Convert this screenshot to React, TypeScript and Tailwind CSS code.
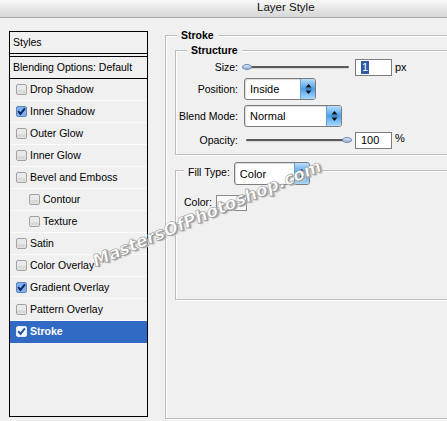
import React from "react";

function Box({ checked, onBlue }: { checked?: boolean; onBlue?: boolean }) {
  return (
    <svg width="11" height="11" viewBox="0 0 11 11" className="shrink-0">
      <rect
        x="0.5"
        y="0.5"
        width="10"
        height="10"
        rx="1.5"
        fill={checked ? (onBlue ? "#f4f8ff" : "#7fb0e8") : "#e9e9e9"}
        stroke={checked ? (onBlue ? "#dfe9f8" : "#5b86c0") : "#a2a2a2"}
      />
      {!checked && <rect x="1.5" y="6" width="8" height="3.5" fill="#d9d9d9" />}
      {checked && (
        <path d="M2.2 5.2 L4.5 7.9 L8.9 2.4" stroke={onBlue ? "#1d4fa6" : "#0c2563"} strokeWidth="1.9" fill="none" />
      )}
    </svg>
  );
}

function Row({ label, checked, indent, selected }: { label: string; checked?: boolean; indent?: boolean; selected?: boolean }) {
  return (
    <div
      className={`flex h-[22px] items-center gap-[3px] border-b ${
        selected ? "bg-[#316ac5] border-[#316ac5] text-white font-bold" : "border-[#fbfbfb] text-black"
      } ${indent ? "pl-[19px]" : "pl-[6px]"}`}
    >
      <Box checked={checked} onBlue={selected} />
      <span className="leading-none">{label}</span>
    </div>
  );
}

function Arrows() {
  return (
    <svg width="7" height="12" viewBox="0 0 7 12">
      <polygon points="3.5,1 0.5,4.6 6.5,4.6" fill="#111" />
      <rect x="0.5" y="5.6" width="6" height="0.8" fill="#1a3a5c" opacity="0.6" />
      <polygon points="0.5,7.4 6.5,7.4 3.5,11" fill="#111" />
    </svg>
  );
}

function Select({ value, width, height = 22 }: { value: string; width: number; height?: number }) {
  return (
    <div
      className="flex shrink-0 items-stretch rounded-[3px] border border-[#7c7c7c] bg-white shadow-[inset_1px_1px_1px_rgba(0,0,0,0.15)]"
      style={{ width, height }}
    >
      <span className="flex flex-1 items-center pl-[5px] pt-[1px] text-[11px] text-black">{value}</span>
      <span className="flex w-[15px] items-center justify-center rounded-r-[3px] border-l border-[#6a9fd0] bg-gradient-to-b from-[#b9ddfb] via-[#4a9ee9] to-[#a9dafc]">
        <Arrows />
      </span>
    </div>
  );
}

function Slider({ at }: { at: "start" | "end" }) {
  return (
    <div className="relative h-[17px] w-[110px] shrink-0">
      <div className="absolute left-[4px] right-[3px] top-[7px] h-[2px] rounded-full bg-[#5a5a5a] shadow-[0_1px_0_#d8d8d8]" />
      <div
        className={`absolute top-[5px] h-[6px] w-[10px] rounded-[50%] border border-[#6f86b0] bg-gradient-to-b from-[#dfe9f8] to-[#8fa9d6] ${
          at === "start" ? "left-0" : "right-0"
        }`}
      />
    </div>
  );
}

function NumInput({ value, highlight }: { value: string; highlight?: boolean }) {
  return (
    <div className="flex h-[17px] w-[37px] shrink-0 items-center border border-[#7d7d7d] bg-white pl-[5px] text-[11px] text-black">
      {highlight ? <span className="bg-[#2d5ca8] px-[1px] leading-[13px] text-white">{value}</span> : <span>{value}</span>}
    </div>
  );
}

export default function App() {
  return (
    <div className="relative h-[421px] w-[447px] overflow-hidden bg-[#f0f0f0] font-['Liberation_Sans',Arial,sans-serif] text-[10.5px] text-black">
      {/* title bar */}
      <div className="h-[18px] border-b border-[#a8a8a8] bg-gradient-to-b from-[#f9f9f9] to-[#d6d6d6] pl-[257px] text-[11.5px] leading-[15px] text-[#111]">
        Layer Style
      </div>

      <div className="flex items-start pl-[9px] pt-[11px]">
        {/* left list */}
        <div className="mt-[2px] h-[386px] w-[139px] shrink-0 border border-black bg-[#f0f0f0]">
          <div className="flex h-[22px] items-center border-b border-black pl-[3px]">Styles</div>
          <div className="h-[2px]" />
          <div className="flex h-[23px] items-center border-y border-black pl-[3px]">Blending Options: Default</div>
          <Row label="Drop Shadow" />
          <Row label="Inner Shadow" checked />
          <Row label="Outer Glow" />
          <Row label="Inner Glow" />
          <Row label="Bevel and Emboss" />
          <Row label="Contour" indent />
          <Row label="Texture" indent />
          <Row label="Satin" />
          <Row label="Color Overlay" />
          <Row label="Gradient Overlay" checked />
          <Row label="Pattern Overlay" />
          <Row label="Stroke" checked selected />
        </div>

        {/* right side */}
        <fieldset className="ml-[17px] h-[390px] w-[300px] shrink-0 border border-[#bdbdbd] shadow-[inset_1px_1px_0_#fff,1px_1px_0_#fff]">
          <legend className="ml-[11px] bg-[#f0f0f0] px-[4px] font-bold leading-[13px]">Stroke</legend>

          <fieldset className="ml-[9px] mt-[2px] h-[111px] w-[300px] border border-[#bdbdbd] shadow-[inset_1px_1px_0_#fff,1px_1px_0_#fff]">
            <legend className="ml-[11px] bg-[#f0f0f0] px-[4px] font-bold leading-[13px]">Structure</legend>

            <div className="mt-[2px] flex h-[17px] items-center">
              <span className="w-[62px] text-right">Size:</span>
              <span className="ml-[4px]">
                <Slider at="start" />
              </span>
              <span className="ml-[3px]">
                <NumInput value="1" highlight />
              </span>
              <span className="ml-[3px] text-[11px] leading-none">px</span>
            </div>

            <div className="mt-[2px] flex h-[22px] items-center">
              <span className="w-[62px] pt-[2px] text-right">Position:</span>
              <span className="ml-[6px]">
                <Select value="Inside" width={72} />
              </span>
            </div>

            <div className="mt-[5px] flex h-[22px] items-center">
              <span className="w-[62px] pt-[2px] text-right">Blend Mode:</span>
              <span className="ml-[6px]">
                <Select value="Normal" width={98} />
              </span>
            </div>

            <div className="mt-[5px] flex h-[17px] items-center">
              <span className="w-[62px] text-right">Opacity:</span>
              <span className="ml-[4px]">
                <Slider at="end" />
              </span>
              <span className="ml-[3px]">
                <NumInput value="100" />
              </span>
              <span className="ml-[3px] -mt-[4px] text-[11px] leading-none">%</span>
            </div>
          </fieldset>

          <fieldset className="ml-[9px] mt-[7px] h-[138px] w-[300px] border border-[#bdbdbd] shadow-[inset_1px_1px_0_#fff,1px_1px_0_#fff]">
            <legend className="ml-[8px] bg-[#f0f0f0] px-[4px]">
              <div className="flex items-start">
                <span className="pt-[4px] leading-[13px]">Fill Type:</span>
                <span className="mb-[-6px] ml-[4px]">
                  <Select value="Color" width={76} height={23} />
                </span>
              </div>
            </legend>
            <div className="mt-[16px] flex h-[16px] items-center pl-[8px]">
              <span>Color:</span>
              <span className="ml-[4px] h-[16px] w-[31px] border border-[#8a8a8a] bg-[#f9f9f9]" />
            </div>
          </fieldset>
        </fieldset>
      </div>

      {/* watermark */}
      <div className="pointer-events-none absolute left-[207px] top-[214px] -translate-x-1/2 -translate-y-1/2 rotate-[-23deg] whitespace-nowrap font-['DejaVu_Sans',sans-serif] text-[17px] font-bold italic tracking-[0px] text-white [-webkit-text-stroke:0.5px_#8f8f8f] [text-shadow:1px_1px_0_#9c9c9c,2px_2px_1px_#c4c4c4]">
        MastersOfPhotoshop.com
      </div>
    </div>
  );
}
